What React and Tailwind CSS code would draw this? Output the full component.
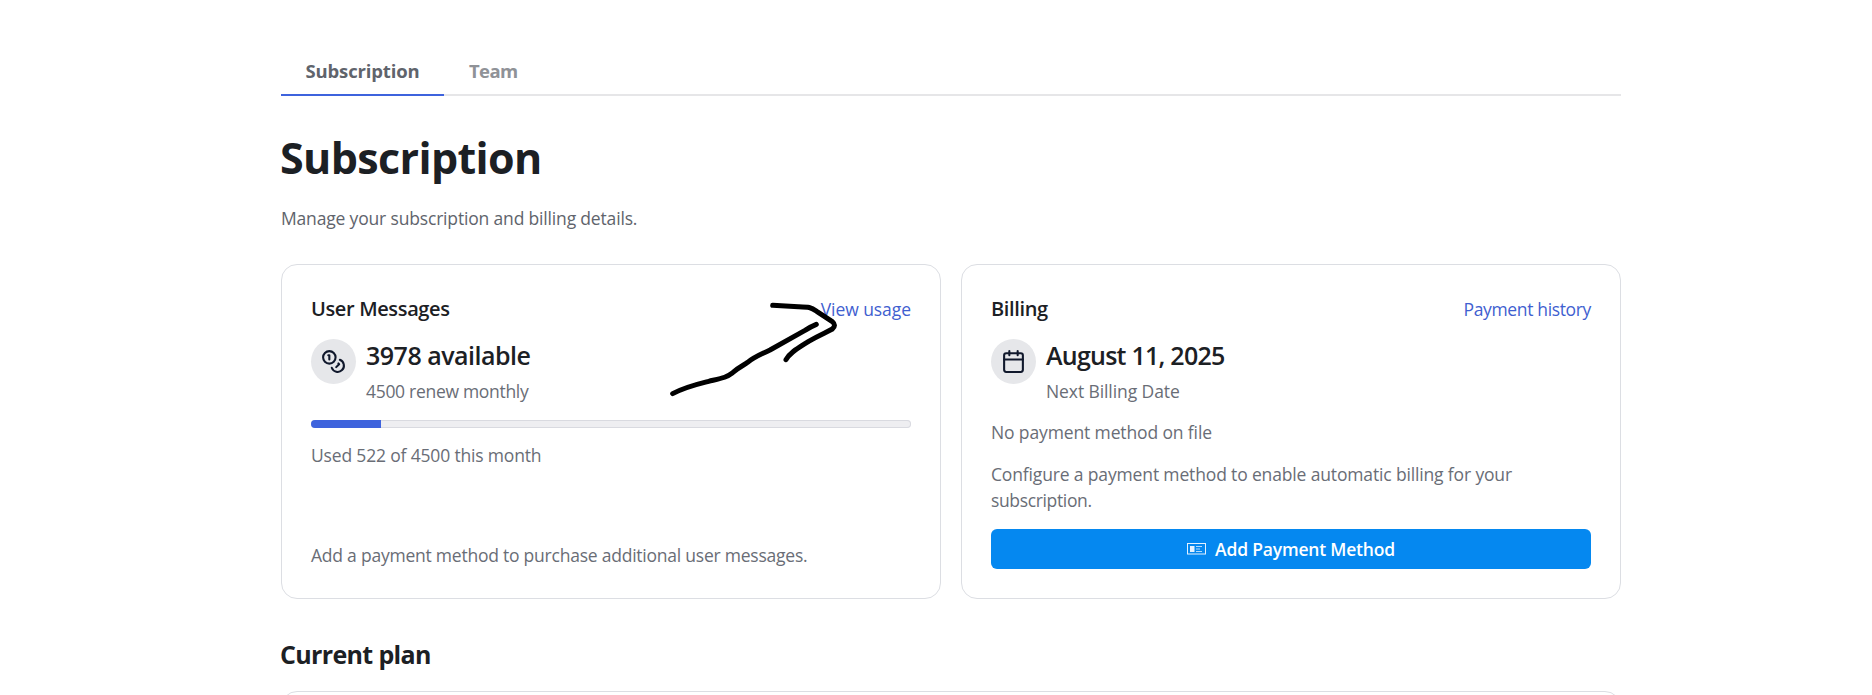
import { Calendar, Coins } from "lucide-react";

function Tab({ active, children }) {
  return (
    <button
      className={
        active
          ? "-mb-0.5 h-12 w-[163px] border-b-2 border-[#3e63dd] text-[18.5px] leading-[46px] font-bold tracking-[-0.15px] text-[#60646c]"
          : "-mb-0.5 h-12 border-b-2 border-transparent px-[25px] text-[18.5px] leading-[46px] font-bold tracking-[-0.6px] text-[#8f9297]"
      }
    >
      {children}
    </button>
  );
}

function Card({ title, link, children }) {
  return (
    <section className="relative flex h-[335px] w-[660px] flex-col rounded-2xl border border-[#dcdee3] p-[29px]">
      <header className="mt-px flex h-[28px] items-baseline justify-between leading-[28px]">
        <h3 className="text-[20px] font-[550] tracking-[-0.36px] text-[#1c2024]">{title}</h3>
        <a className="text-[#3f5fd0]">{link}</a>
      </header>
      {children}
    </section>
  );
}

function Stat({ icon: Icon, value, label }) {
  return (
    <div className="mt-[15px] flex gap-[10px]">
      <div className="mt-px flex size-[45px] items-center justify-center rounded-full bg-[#e6e7ea] text-[#10182c]">
        <Icon size={25} strokeWidth={2} />
      </div>
      <div>
        <div className="text-[25px] leading-[34px] font-[550] tracking-[-0.5px] text-[#1c2024]">{value}</div>
        <div className="mt-1.5 leading-[26px]">{label}</div>
      </div>
    </div>
  );
}

function IdCardIcon() {
  return (
    <svg width="19" height="12" viewBox="0 0 19 12" fill="none">
      <rect x="0.5" y="0.5" width="18" height="10.5" stroke="#e4f1ff" />
      <rect x="3" y="3" width="4.5" height="6" fill="#e4f1ff" />
      <path d="M9 3.5h6M9 6h4M9 8.5h6" stroke="#b4dafd" />
    </svg>
  );
}

function Arrow() {
  return (
    <svg
      className="pointer-events-none absolute -top-[10px] left-[358px]"
      width="340"
      height="220"
      viewBox="0 0 1020 660"
      fill="none"
      stroke="#000"
      strokeWidth="15"
      strokeLinecap="round"
      strokeLinejoin="round"
    >
      <path d="M98 416C135 396 170 388 206 379C248 369 258 368 278 353C303 332 310 332 323 322C342 306 365 297 390 285L495 226Q512 215 529 208" />
      <path d="M398 151L475 155C506 156 512 156 530 169L577 200Q590 211 577 222C558 233 540 239 506 259C478 277 450 291 438 314" />
    </svg>
  );
}

export default function App() {
  return (
    <main className="h-[695px] overflow-hidden bg-white pt-12 pl-[281px] font-['Open_Sans',sans-serif] text-[17.5px] text-[#696d76]">
      <div className="w-[1340px]">
        <nav className="flex h-12 border-b-2 border-[#e6e6e8]">
          <Tab active>Subscription</Tab>
          <Tab>Team</Tab>
        </nav>
        <h1 className="mt-[34px] -ml-px text-[43px] leading-[56px] font-bold tracking-[-0.63px] text-[#1c2024]">Subscription</h1>
        <p className="mt-[19px] leading-[26px] tracking-[-0.17px] text-[#60646c]">Manage your subscription and billing details.</p>

        <div className="mt-[33px] flex gap-5">
          <Card title="User Messages" link={<span className="tracking-[-0.06px]">View usage</span>}>
            <Stat icon={Coins} value="3978 available" label={<span className="tracking-[-0.3px]">4500 renew monthly</span>} />
            <div className="mt-4 h-2 overflow-hidden rounded-full bg-[#eeeef1] shadow-[inset_0_0_0_1px_#d9dae0]">
              <div className="h-2 w-[70px] bg-[#3e63dd]" />
            </div>
            <p className="mt-[14px] leading-[26px] tracking-[-0.17px]">Used 522 of 4500 this month</p>
            <p className="mt-auto mb-px leading-[26px] tracking-[-0.23px]">Add a payment method to purchase additional user messages.</p>
            <Arrow />
          </Card>

          <Card title="Billing" link={<span className="tracking-[-0.35px]">Payment history</span>}>
            <Stat
              icon={Calendar}
              value={<span className="tracking-[-0.75px]">August 11, 2025</span>}
              label={<span className="tracking-[-0.09px]">Next Billing Date</span>}
            />
            <p className="mt-[15px] leading-[26px] tracking-[-0.13px]">No payment method on file</p>
            <p className="mt-4 w-[560px] leading-[26px] tracking-[-0.15px]">
              Configure a payment method to enable automatic billing for your <span className="tracking-[-0.35px]">subscription.</span>
            </p>
            <button className="mt-4 flex h-10 shrink-0 items-center justify-center gap-[9px] rounded-md bg-[#0588f0] font-[650] tracking-[-0.2px] text-white">
              <IdCardIcon />
              <span className="pt-px">Add Payment Method</span>
            </button>
          </Card>
        </div>

        <h2 className="mt-[38px] -ml-px text-[25px] leading-[34px] font-bold tracking-[-0.65px] text-[#1c2024]">Current plan</h2>
        <div className="mt-5 h-40 rounded-2xl border border-[#dcdee3]" />
      </div>
    </main>
  );
}
